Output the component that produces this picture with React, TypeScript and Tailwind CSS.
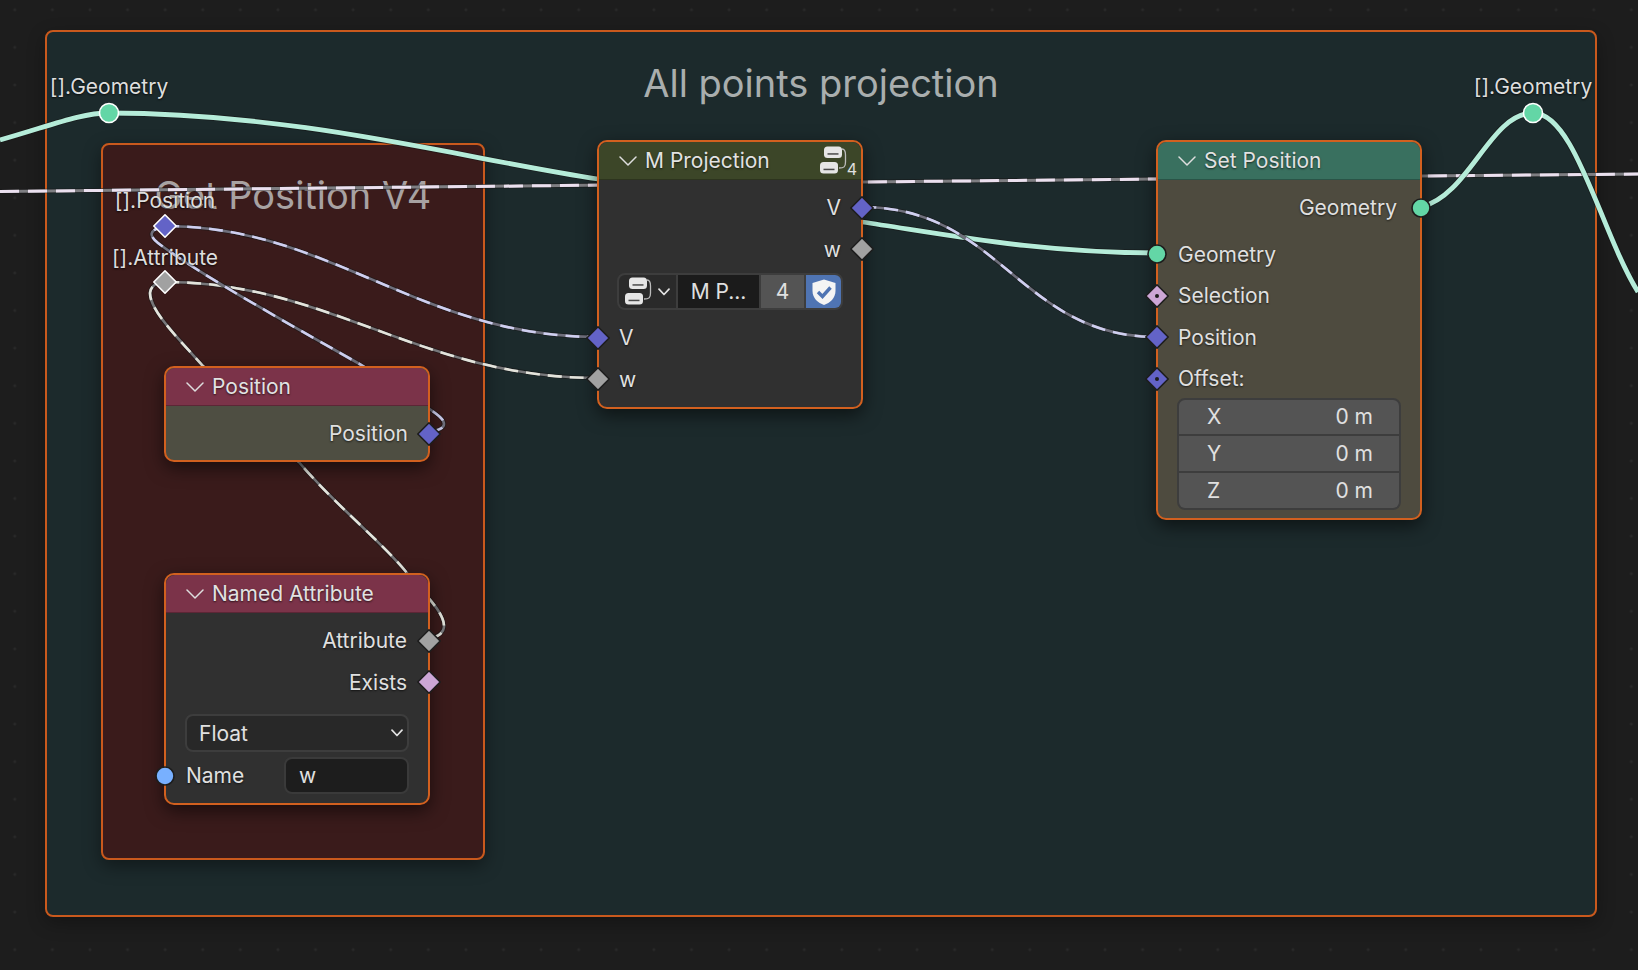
const FONT = "font-['Inter','Liberation_Sans',sans-serif]";

function Socket({ color, dot, selected, round }: { color: string; dot?: boolean; selected?: boolean; round?: boolean }) {
  const stroke = selected ? "#ffffff" : "#1d1d1d";
  return (
    <svg width="26" height="26" viewBox="0 0 26 26" className="block">
      {round ? (
        <circle cx="13" cy="13" r={selected ? 9.5 : 9} fill={color} stroke={stroke} strokeWidth="1.6" />
      ) : (
        <polygon points="13,1.8 24.2,13 13,24.2 1.8,13" fill={color} stroke={stroke} strokeWidth="1.6" strokeLinejoin="round" />
      )}
      {dot && <circle cx="13" cy="13" r="2" fill="#1d1d1d" />}
    </svg>
  );
}

function Chevron({ small }: { small?: boolean }) {
  return small ? (
    <svg width="12" height="8" viewBox="0 0 12 8" className="block">
      <polyline points="1,1.2 6,6.5 11,1.2" fill="none" stroke="#e2e2e2" strokeWidth="1.7" strokeLinecap="round" strokeLinejoin="round" />
    </svg>
  ) : (
    <svg width="18" height="10" viewBox="0 0 18 10" className="block">
      <polyline points="1,1 9,9 17,1" fill="none" stroke="#dedede" strokeWidth="1.5" strokeLinecap="round" strokeLinejoin="round" />
    </svg>
  );
}

function GroupIcon() {
  return (
    <svg width="30" height="30" viewBox="0 0 30 30" className="block">
      <path d="M22 3 C25 3 25.5 6 25.5 9 V16 C25.5 21 24 22 19 22" fill="none" stroke="#bdbdbd" strokeWidth="1.3" />
      <rect x="4" y="0.5" width="18" height="11.5" rx="3.5" fill="#e6e6e6" />
      <rect x="0" y="16" width="18" height="11.5" rx="3.5" fill="#e6e6e6" />
      <rect x="7.5" y="7.2" width="11" height="1.5" fill="#4a4a4a" />
      <rect x="3.5" y="22.7" width="11" height="1.5" fill="#4a4a4a" />
    </svg>
  );
}

function Row({ label, side, socket, className = "pr-[20px]" }: { label: string; side: "in" | "out"; socket: React.ReactNode; className?: string }) {
  return (
    <div className={`relative flex h-[41.5px] items-center ${side === "out" ? "justify-end" : "pl-[20px]"} ${className}`}>
      <span className="text-[21px] leading-none text-[#e0e0e0] [text-shadow:0_1px_2px_rgba(0,0,0,0.65)]">{label}</span>
      <div className={`absolute top-1/2 -translate-y-1/2 ${side === "out" ? "-right-[14px]" : "-left-[14px]"}`}>{socket}</div>
    </div>
  );
}

function Header({ title, color, extra }: { title: string; color: string; extra?: React.ReactNode }) {
  return (
    <div className={`relative flex h-[38px] shrink-0 items-center gap-[8px] rounded-t-[9px] border-b border-black/25 pl-[20px] ${color}`}>
      <Chevron />
      <span className="text-[21px] leading-none text-[#e2e2e2] [text-shadow:0_1px_2px_rgba(0,0,0,0.65)]">{title}</span>
      {extra}
    </div>
  );
}

const nodeBase =
  "absolute z-20 flex w-[266px] flex-col rounded-[10px] border-2 border-[#d2601f] shadow-[0_6px_18px_rgba(0,0,0,0.55)]";
const BLUE = "#6363c7";
const GRAY = "#a1a1a1";
const PINK = "#cca6d6";
const GREEN = "#63d6a6";

function Wire({ d, light, base = "#6f6f7c", width = 2.6, dash = "14 8" }: { d: string; light: string; base?: string; width?: number; dash?: string }) {
  return (
    <g fill="none" strokeLinecap="butt">
      <path d={d} stroke="#161616" strokeOpacity="0.6" strokeWidth={width + 1.6} />
      <path d={d} stroke={base} strokeWidth={width} />
      <path d={d} stroke={light} strokeWidth={width} strokeDasharray={dash} />
    </g>
  );
}

function Reroute({ label, x, y, labelY, color, round }: { label: string; x: number; y: number; labelY: number; color: string; round?: boolean }) {
  return (
    <>
      <span
        className="absolute z-30 -translate-x-1/2 -translate-y-1/2 whitespace-nowrap text-[21px] leading-none text-[#dedede] [text-shadow:0_1px_2px_rgba(0,0,0,0.8)]"
        style={{ left: x, top: labelY }}
      >
        {label}
      </span>
      <div className="absolute z-30 -translate-x-1/2 -translate-y-1/2" style={{ left: x, top: y }}>
        <Socket color={color} selected round={round} />
      </div>
    </>
  );
}

const GEO_A = "M0 140 C50 126 80 113 109 113 C300 113 470 160 598 179";
const GEO_B = "M862 222 C950 235 1040 253 1157 253";
const GEO_C = "M1421 207 C1470 195 1490 113 1533 113 C1575 113 1600 230 1638 292";

export default function App() {
  return (
    <div className={`relative h-[970px] w-[1638px] overflow-hidden bg-[#1d1d1d] ${FONT}`}>
      <div className="absolute inset-0 bg-[radial-gradient(circle,rgba(255,255,255,0.05)_1.2px,transparent_1.8px)] bg-[length:37.6px_37.6px] bg-[position:-4px_-9px]" />

      {/* Outer frame */}
      <div className="absolute left-[45px] top-[30px] z-0 flex h-[887px] w-[1552px] justify-center rounded-[8px] border-2 border-[#c9591d] bg-[#1c2a2c] shadow-[0_6px_18px_rgba(0,0,0,0.3)]">
        <span className="mt-[29px] text-[38px] leading-[44px] text-[#a9aeae]">All points projection</span>
      </div>

      {/* Inner frame */}
      <div className="absolute left-[101px] top-[143px] z-0 flex h-[717px] w-[384px] justify-center rounded-[8px] border-2 border-[#c9591d] bg-[#3a1b1b] shadow-[0_6px_18px_rgba(0,0,0,0.4)]">
        <span className="mt-[28px] text-[38px] leading-[44px] text-[#a8a2a2]">Get Position V4</span>
      </div>

      {/* Wires */}
      <svg className="absolute inset-0 z-10" width="1638" height="970" viewBox="0 0 1638 970">
        <Wire d="M0 191.5 L520 186 L862 182 L1157 179 L1421 176 L1638 174" light="#ebe0ef" base="#7e7e82" width={3} dash="19 9" />
        <g fill="none">
          {[GEO_A, GEO_B, GEO_C].map((d) => (
            <path key={d} d={d} stroke="#161616" strokeOpacity="0.6" strokeWidth="6.4" />
          ))}
          {[GEO_A, GEO_B, GEO_C].map((d) => (
            <path key={d} d={d} stroke="#b5ecd9" strokeWidth="4.8" />
          ))}
        </g>
        <Wire d="M165 226 C330 226 420 337 598 337" light="#cfcff0" />
        <Wire d="M165 282 C330 282 420 378 598 378" light="#e4e4dc" base="#77777a" />
        <Wire d="M862 207 C1000 207 1020 337 1157 337" light="#cfcff0" />
        <Wire d="M429 432 C440 430 444 428 444 424 C444 418 436 414 420 402 L363 366 C300 330 200 275 158 243 C149 236 148 230 165 226" light="#cfcff0" />
        <Wire d="M429 639 C440 636 444 632 444 626 C444 612 425 595 407 573 C380 540 335 505 298 461 L203 366 C175 335 150 310 150 293 C150 288 155 282 165 282" light="#e4e4dc" base="#77777a" />
      </svg>

      {/* Position */}
      <div className={`${nodeBase} left-[164px] top-[366px] h-[96px] bg-[#4e4e42]`}>
        <Header title="Position" color="bg-[#7b3349]" />
        <Row label="Position" side="out" socket={<Socket color={BLUE} />} className="mt-[7px] pr-[20px]" />
      </div>

      {/* Named Attribute */}
      <div className={`${nodeBase} left-[164px] top-[573px] h-[232px] bg-[#303030]`}>
        <Header title="Named Attribute" color="bg-[#7b3349]" />
        <Row label="Attribute" side="out" socket={<Socket color={GRAY} />} className="mt-[7px] pr-[21px]" />
        <Row label="Exists" side="out" socket={<Socket color={PINK} />} className="pr-[21px]" />
        <div className="mx-[19px] mt-[11px] flex h-[38px] items-center justify-between rounded-[8px] border-2 border-[#3d3d3d] bg-[#282828] pl-[12px] pr-[4px]">
          <span className="text-[21px] leading-none text-[#e0e0e0]">Float</span>
          <Chevron small />
        </div>
        <div className="relative mt-[5px] flex h-[37px] items-center pl-[20px] pr-[19px]">
          <div className="absolute -left-[14px] top-1/2 -translate-y-1/2"><Socket color="#78b0ff" round /></div>
          <span className="w-[98px] text-[21px] leading-none text-[#e0e0e0] [text-shadow:0_1px_2px_rgba(0,0,0,0.65)]">Name</span>
          <div className="flex h-[37px] flex-1 items-center rounded-[8px] border-2 border-[#3a3a3a] bg-[#1d1d1d] pl-[13px] text-[21px] leading-none text-[#e0e0e0]">w</div>
        </div>
      </div>

      {/* M Projection */}
      <div className={`${nodeBase} left-[597px] top-[140px] h-[269px] bg-[#303030]`}>
        <Header
          title="M Projection"
          color="bg-[#3c4628]"
          extra={
            <div className="absolute right-[4px] top-[4px] flex items-end">
              <GroupIcon />
              <span className="-ml-[3px] translate-y-[1px] text-[16px] leading-[15px] text-[#e0e0e0]">4</span>
            </div>
          }
        />
        <Row label="V" side="out" socket={<Socket color={BLUE} />} className="mt-[7px] pr-[20px]" />
        <Row label="w" side="out" socket={<Socket color={GRAY} />} />
        <div className="mx-[18px] mt-[3px] flex h-[37px] items-stretch overflow-hidden rounded-[8px] border-2 border-[#3d3d3d] bg-[#3d3d3d]">
          <div className="flex w-[57px] items-center gap-[3px] bg-[#2a2a2a] pl-[6px]">
            <GroupIcon />
            <Chevron small />
          </div>
          <div className="ml-[2px] flex w-[81px] items-center justify-center bg-[#1b1b1b] text-[21px] leading-none text-[#e0e0e0]">M P...</div>
          <div className="ml-[2px] flex w-[43px] items-center justify-center bg-[#545454] text-[21px] leading-none text-[#e0e0e0]">4</div>
          <div className="ml-[2px] flex flex-1 items-center justify-center bg-[#4f74b3]">
            <svg width="26" height="28" viewBox="0 0 26 28">
              <path d="M13 1.5 L24.5 5 V13 C24.5 20 19 25 13 27 C7 25 1.5 20 1.5 13 V5 Z" fill="#f4f4f4" />
              <polyline points="7,14 11.5,18.5 19.5,9.5" fill="none" stroke="#4f74b3" strokeWidth="3.4" />
            </svg>
          </div>
        </div>
        <Row label="V" side="in" socket={<Socket color={BLUE} />} className="mt-[7px]" />
        <Row label="w" side="in" socket={<Socket color={GRAY} />} />
      </div>

      {/* Set Position */}
      <div className={`${nodeBase} left-[1156px] top-[140px] h-[380px] bg-[#4e4b3f]`}>
        <Header title="Set Position" color="bg-[#39705f]" />
        <Row label="Geometry" side="out" socket={<Socket color={GREEN} round />} className="mt-[7px] pr-[23px]" />
        <Row label="Geometry" side="in" socket={<Socket color={GREEN} round />} className="mt-[5px]" />
        <Row label="Selection" side="in" socket={<Socket color={PINK} dot />} />
        <Row label="Position" side="in" socket={<Socket color={BLUE} />} />
        <Row label="Offset:" side="in" socket={<Socket color={BLUE} dot />} />
        <div className="mx-[19px] -mt-[2px] flex h-[112px] flex-col gap-[2px] overflow-hidden rounded-[8px] border-2 border-[#3d3d3d] bg-[#3d3d3d]">
          {["X", "Y", "Z"].map((a) => (
            <div key={a} className="flex flex-1 items-center justify-between bg-[#545454] pl-[28px] pr-[26px] text-[21px] leading-none text-[#e0e0e0]">
              <span>{a}</span>
              <span>0 m</span>
            </div>
          ))}
        </div>
      </div>

      <Reroute label="[].Geometry" x={109} y={113} labelY={86} color={GREEN} round />
      <Reroute label="[].Position" x={165} y={226} labelY={200} color={BLUE} />
      <Reroute label="[].Attribute" x={165} y={282} labelY={257} color={GRAY} />
      <Reroute label="[].Geometry" x={1533} y={113} labelY={86} color={GREEN} round />
    </div>
  );
}
